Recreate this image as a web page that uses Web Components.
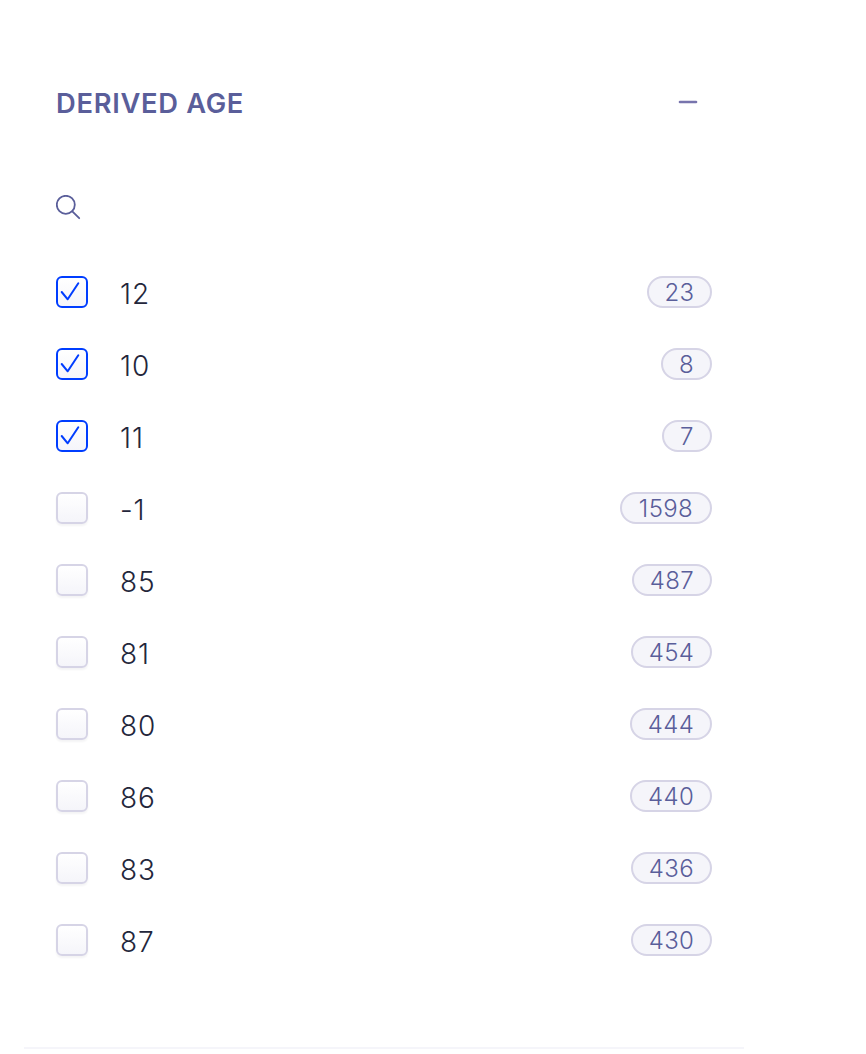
<!DOCTYPE html>
<html lang="en"><head><meta charset="utf-8"><title>Derived age</title>
<style>body{margin:0;background:#fff;font-family:Inter,"Liberation Sans",sans-serif}</style></head><body>
<facet-panel heading="Derived age">
<facet-row label="12" count="23" w="65" checked></facet-row>
<facet-row label="10" count="8" w="51" checked></facet-row>
<facet-row label="11" count="7" w="50" checked></facet-row>
<facet-row label="-1" count="1598" w="92"></facet-row>
<facet-row label="85" count="487" w="80"></facet-row>
<facet-row label="81" count="454" w="81"></facet-row>
<facet-row label="80" count="444" w="82"></facet-row>
<facet-row label="86" count="440" w="82"></facet-row>
<facet-row label="83" count="436" w="81"></facet-row>
<facet-row label="87" count="430" w="81"></facet-row>
</facet-panel>
<script>
class FacetPanel extends HTMLElement{
 constructor(){super();this.attachShadow({mode:'open'}).innerHTML=`<style>
 :host{display:block;box-sizing:border-box;width:720px;height:1049px;margin-left:24px;padding:84px 32px 0;border-bottom:2px solid #f5f5fa}
 header{display:flex;justify-content:space-between;align-items:center;height:38px;padding-right:14px}
 h2{margin:0;font-size:27.3px;line-height:38px;padding-top:2px;font-weight:600;color:#5a5e9a;letter-spacing:.7px;text-transform:uppercase;white-space:nowrap}
 svg{display:block}.minus{margin-bottom:2px}.search{margin:73px 0 35px}
 .rows{display:grid;grid-auto-rows:72px}
 </style><header><h2></h2><svg class="minus" width="20" height="4" viewBox="0 0 20 4"><path d="M2 2H18" stroke="#7774ad" stroke-width="2.6" stroke-linecap="round"/></svg></header>
 <svg class="search" width="26" height="26" viewBox="0 0 26 26" fill="none" stroke="#5a5e9a" stroke-width="1.8"><circle cx="9.8" cy="9.8" r="9"/><path d="M16.3 16.3L23.2 23.2" stroke-linecap="round"/></svg>
 <div class="rows"><slot></slot></div>`;}
 connectedCallback(){this.shadowRoot.querySelector('h2').textContent=this.getAttribute('heading')}
}
class FacetRow extends HTMLElement{
 constructor(){super();this.attachShadow({mode:'open'}).innerHTML=`<style>
 :host{display:flex;align-items:center;height:72px}
 .box{box-sizing:border-box;width:32px;height:32px;border:2px solid #d6d4e6;border-radius:6px;background:linear-gradient(#fff,#f5f5fa);box-shadow:0 2px 2px #23263b0d;margin-right:32px}
 svg{display:none}
 :host([checked]) .box{border-color:#003dff;box-shadow:none}
 :host([checked]) svg{display:block}
 .label{flex:1;font-size:28px;line-height:36px;font-weight:300;color:#23263b;padding-top:3px;letter-spacing:.9px}
 .count{box-sizing:border-box;height:32px;border:2px solid #d6d4e6;border-radius:16px;background:#f5f5fa;color:#5a5e9a;font-size:24px;line-height:30px;font-weight:300;text-align:center;letter-spacing:.4px}
 </style><span class="box"><svg width="28" height="28" viewBox="0 0 28 28" fill="none" stroke="#003dff" stroke-width="2" stroke-linecap="round" stroke-linejoin="round"><path d="M3.7 14L9.7 21.3L20.3 5.3"/></svg></span><span class="label"></span><span class="count"></span>`;}
 connectedCallback(){const q=s=>this.shadowRoot.querySelector(s);q('.label').textContent=this.getAttribute('label');q('.count').textContent=this.getAttribute('count');q('.count').style.width=this.getAttribute('w')+'px'}
}
customElements.define('facet-panel',FacetPanel);customElements.define('facet-row',FacetRow);
</script></body></html>
